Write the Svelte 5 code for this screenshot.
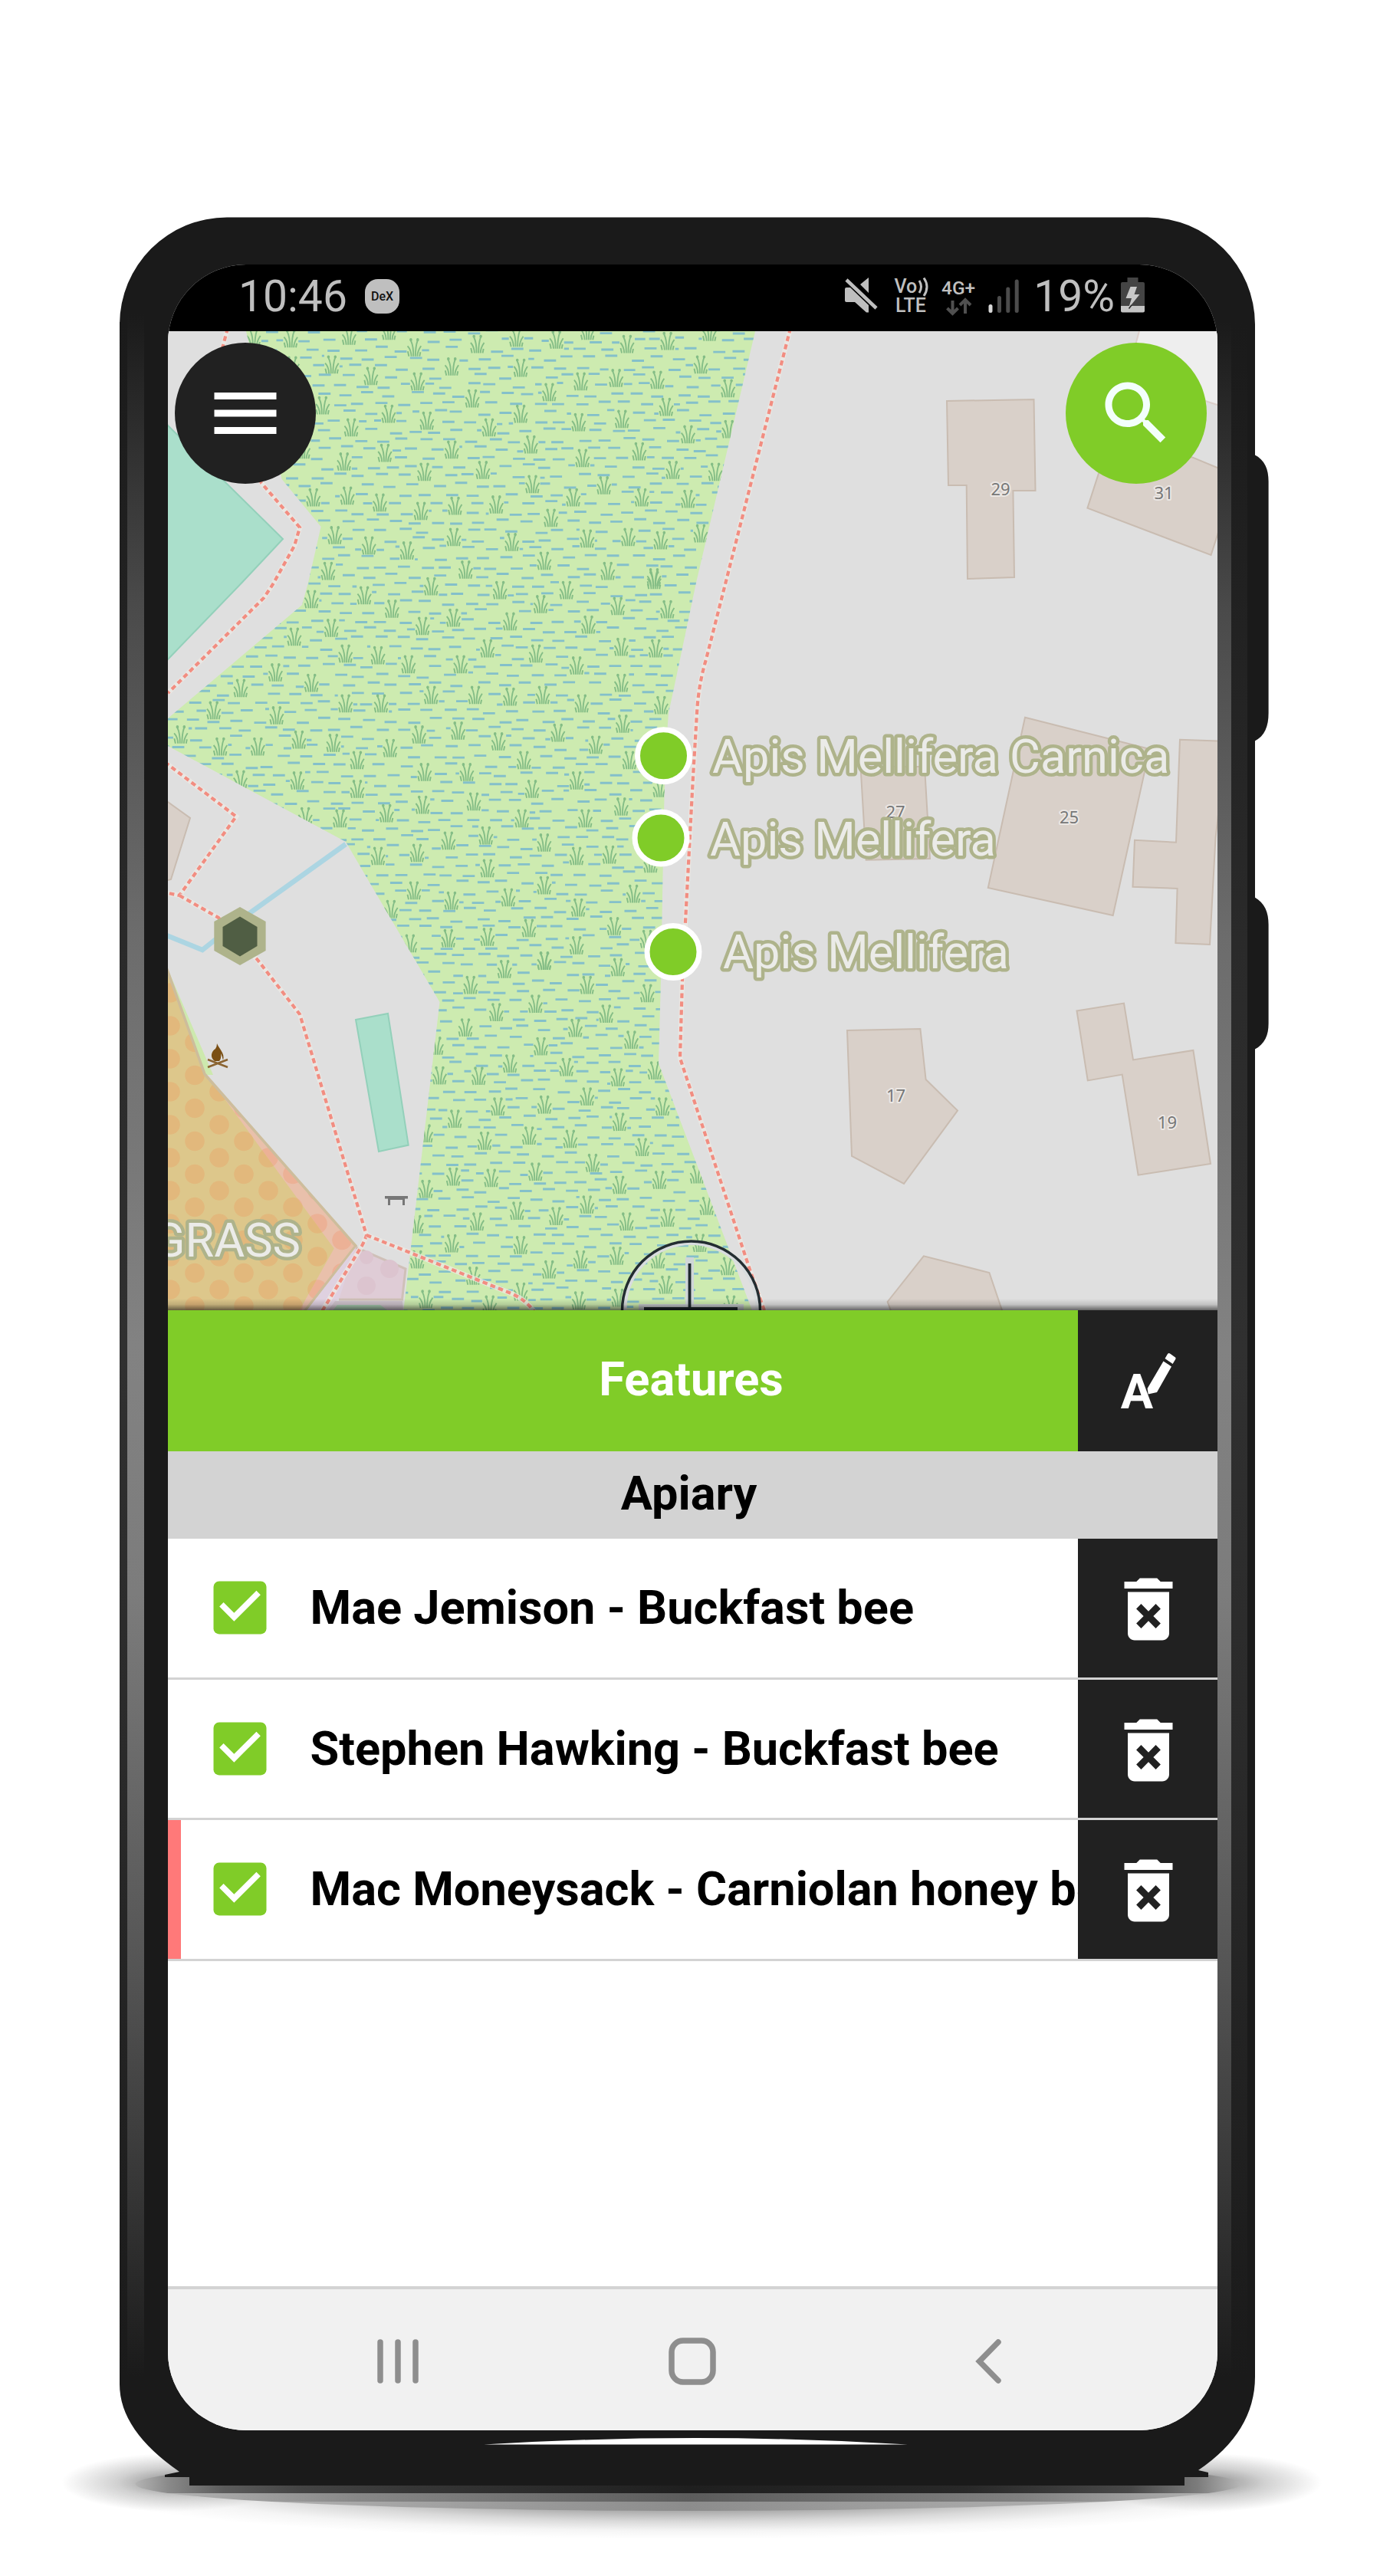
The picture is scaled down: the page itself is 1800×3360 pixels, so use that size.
<script>
  const features = [
    { name: 'Mae Jemison - Buckfast bee', alert: false },
    { name: 'Stephen Hawking - Buckfast bee', alert: false },
    { name: 'Mac Moneysack - Carniolan honey bee', alert: true }
  ];

  const markers = [
    { x: 865.5, y: 985.7, tx: 929, ty: 1008.3, label: 'Apis Mellifera Carnica' },
    { x: 862, y: 1093, tx: 926, ty: 1115.8, label: 'Apis Mellifera' },
    { x: 878, y: 1241.5, tx: 943, ty: 1263.2, label: 'Apis Mellifera' }
  ];

  const houses = [
    '1235,523 1348.5,521 1350.5,640 1321.4,640 1323,753 1262,755 1260.7,633 1237,633',
    '1450,565 1418.4,662.7 1579.6,724 1600,660 1600,615 1555.6,596.7',
    '1337,935.7 1499.5,977 1451.7,1194 1288.8,1158',
    '1122.5,1000 1206,1000 1213,1120 1129.7,1121.7',
    '1539,964.7 1600,967 1585.5,1093 1578,1232 1533.4,1230 1535.6,1159 1477.5,1156.7 1480,1095.7 1534,1098.7',
    '1105,1344 1200.4,1342 1207.6,1408 1249,1448.6 1179,1544 1111,1507.8',
    '1404.5,1318.4 1466,1308.6 1478,1382.4 1556.4,1370 1579,1518 1484.6,1532.7 1463.7,1401.6 1418.8,1409.4',
    '1157.6,1698 1204.8,1638.4 1290.4,1660 1310.7,1720 1166,1720',
    '210,1040 219,1046 248,1067 223,1147 210,1150'
  ];

  const numbers = [
    { x: 1305, y: 646, n: 29 },
    { x: 1518, y: 650.5, n: 31 },
    { x: 1168, y: 1066.5, n: 27 },
    { x: 1394.6, y: 1074, n: 25 },
    { x: 1168.6, y: 1437, n: 17 },
    { x: 1522.4, y: 1472, n: 19 }
  ];

  const trails = [
    'M297 428L288 462L300 540L341 630L391 688L384 712L356 762L344 780L219 904',
    'M215 994L308 1065L234 1168L215 1164',
    'M234 1168L285 1197L336 1252L391 1323L478 1611Q476 1618 472 1625L419 1712',
    'M478 1611L669 1688Q686 1696 697 1711',
    'M1031 428L921 860Q911 893 909 930L904 1013L890 1278L887 1380L978 1656L998 1712'
  ];

  // Reed tufts, grouped by survey sheet: origin, horizontal and vertical scale, points.
  const sheets = [
    [140, 260, 1.823, 3, '348,540 436,545 575,535 670,515 730,580 880,567 973,542 1068,550 1236,567 1332,555 1432,520 1142,515 534,647 627,692 738,713 819,655 983,660 1126,713 1210,700 1308,707 1411,647 1476,740 512,807 868,780 1051,755 669,840 760,867 580,893 983,840 1121,873 1224,860 1329,813 1381,920 1478,900 908,893 660,993 563,1027 819,980 1007,960 1130,1013 1265,987 1345,1060 1446,1067 754,1067 893,1060 1011,1115 1181,1120 490,1167 571,1160 648,1187 746,1220 827,1200 925,1195 1108,1167 1271,1167 1381,1173 1055,1247 541,1315 622,1355 713,1375 824,1322 962,1342 1141,1328 1239,1322 1316,1335 1411,1308 1039,1415 525,1455 852,1450 1190,1455 1300,1480 466,980 440,650'],
    [140, 760, 1.96, 3, '828,15 1004,30 1174,30 1398,-10 522,65 657,50 728,103 1108,85 1305,92 1432,105 885,138 806,170 573,178 478,212 1030,152 1230,165 972,258 1096,278 609,278 692,285 770,320 903,320 1314,252 1402,258 1200,325 430,352 522,393 1314,393 341,413 272,500 433,520 609,473 700,473 828,440 941,440 1030,447 1113,440 1213,473 1416,480 1318,553 188,595 289,642 385,642 490,615 578,628 797,595 897,580 723,648 1000,622 1152,588 1249,635 639,695 1065,695 1335,695 811,742 919,742 340,770 486,775 1200,775 639,808 1086,808 1413,805 806,870 937,857 1314,877 506,915 595,923 714,903 1060,923 1222,923 872,1010 968,990 692,1070 792,1058 1117,1018 1200,1070 1284,1065 972,1118 1389,1100 784,1205 1117,1185 880,1245 1025,1232 1345,1218 725,1278 1204,1272 1078,1352 1296,1345 872,1392 972,1387 1380,1395 774,1412 1200,1420 1117,1480'],
    [200, 1200, 1.96, 2.8, '1000,150 898,180 1188,173 811,238 1109,238 1263,268 977,307 877,337 1158,343 798,393 1079,395 991,462 1222,438 724,460 912,525 1056,538 732,568 832,570 1188,575 1282,550 1109,645 881,682 1000,675 1302,682 771,727 1192,738 961,788 847,807 1066,800 1250,830 697,780 1123,888 977,920 767,938 864,943 697,983 1192,968 1294,950 1390,930 1109,1040 1415,1045 930,1063 1030,1082 828,1102 1210,1102 1315,1088 673,1112 763,1182 939,1188 1397,1180 1092,1240 1185,1227 1290,1240 1012,1277 675,1240 1468,1265 818,1300 1310,1333 939,1358 697,1385 1088,1390 1190,1380 860,1405 1476,1405']
  ];

  const tufts = sheets.flatMap(([ox, oy, sx, sy, points]) =>
    points.split(' ').map((p) => {
      const [x, y] = p.split(',').map(Number);
      return { x: +(ox + x / sx).toFixed(1), y: +(oy + y / sy).toFixed(1) };
    })
  );

  // Water dashes on a jittered grid; a dash that meets a tuft is trimmed to what lies beside it.
  let seed = 7;
  function random() {
    seed = (seed * 16807) % 2147483647;
    return seed / 2147483647;
  }
  let water = '';
  for (let row = 0; row < 110; row++) {
    for (let col = 0; col < 29; col++) {
      let start = 200 + col * 29 + (row % 2) * 14 + (random() - 0.5) * 11;
      const y = 432 + row * 11.8 + (random() - 0.5) * 7;
      let end = start + 15.8;
      for (const t of tufts) {
        if (y < t.y - 13 || y > t.y + 13 || end < t.x - 10 || start > t.x + 10) continue;
        if (start < t.x - 10) end = t.x - 10;
        else if (end > t.x + 10) start = t.x + 10;
        else end = start;
      }
      if (end - start > 3) water += `M${start.toFixed(1)} ${y.toFixed(1)}H${end.toFixed(1)}`;
    }
  }
</script>

<div class="stage">
  <svg class="frame" viewBox="0 0 1800 3360" aria-hidden="true">
    <defs>
      <radialGradient id="floor">
        <stop offset="0" stop-color="#000" stop-opacity=".6" />
        <stop offset=".48" stop-color="#000" stop-opacity=".34" />
        <stop offset=".68" stop-color="#000" stop-opacity=".15" />
        <stop offset=".85" stop-color="#000" stop-opacity=".04" />
        <stop offset="1" stop-color="#000" stop-opacity="0" />
      </radialGradient>
      <radialGradient id="corner">
        <stop offset="0" stop-color="#000" stop-opacity=".42" />
        <stop offset=".5" stop-color="#000" stop-opacity=".16" />
        <stop offset="1" stop-color="#000" stop-opacity="0" />
      </radialGradient>
      <linearGradient id="edge" x1="0" x2="0" y1="0" y2="1">
        <stop offset="0" stop-color="#1a1a1a" />
        <stop offset=".14" stop-color="#4a4a4a" />
        <stop offset=".3" stop-color="#6c6c6c" />
        <stop offset=".5" stop-color="#828282" />
        <stop offset=".62" stop-color="#7c7c7c" />
        <stop offset=".8" stop-color="#555" />
        <stop offset=".93" stop-color="#303030" />
        <stop offset="1" stop-color="#1a1a1a" />
      </linearGradient>
      <linearGradient id="rim" x1="0" x2="0" y1="0" y2="1">
        <stop offset="0" stop-color="#1a1a1a" />
        <stop offset=".3" stop-color="#2a2a2a" />
        <stop offset=".5" stop-color="#303030" />
        <stop offset=".7" stop-color="#2a2a2a" />
        <stop offset="1" stop-color="#1a1a1a" />
      </linearGradient>
      <linearGradient id="band1"><stop offset="0" stop-color="#b4b4b4" /><stop offset=".03" stop-color="#8a8a8a" /><stop offset=".08" stop-color="#5c5c5c" /><stop offset=".15" stop-color="#444" /><stop offset=".25" stop-color="#363636" /><stop offset=".5" stop-color="#1f1f1f" /><stop offset=".75" stop-color="#282828" /><stop offset=".9" stop-color="#484848" /><stop offset=".96" stop-color="#7c7c7c" /><stop offset="1" stop-color="#b8b8b8" /></linearGradient>
      <linearGradient id="band2"><stop offset="0" stop-color="#bbb" /><stop offset=".2" stop-color="#888" /><stop offset=".5" stop-color="#5c5c5c" /><stop offset=".8" stop-color="#808080" /><stop offset="1" stop-color="#bbb" /></linearGradient>
      <linearGradient id="band3"><stop offset="0" stop-color="#bbb" /><stop offset=".5" stop-color="#8c8c8c" /><stop offset="1" stop-color="#c0c0c0" /></linearGradient>
      <clipPath id="base"><ellipse cx="897.5" cy="3240" rx="721" ry="35" /></clipPath>
    </defs>
    <ellipse cx="900" cy="3240" rx="820" ry="72" fill="url(#floor)" />
    <ellipse cx="225" cy="3238" rx="145" ry="38" fill="url(#corner)" />
    <ellipse cx="1575" cy="3238" rx="150" ry="38" fill="url(#corner)" />
    <g clip-path="url(#base)">
      <rect x="176" y="3200" width="1444" height="52" fill="url(#band1)" />
      <rect x="176" y="3252" width="1444" height="11" fill="url(#band2)" />
      <rect x="176" y="3263" width="1444" height="12" fill="url(#band3)" />
    </g>
    <path fill="#1a1a1a" d="M1636 593C1650 600 1654.600 612 1654.600 628V930C1654.600 947 1650 960 1636 967ZM1636 1170C1650 1178 1654.600 1190 1654.600 1206V1335C1654.600 1350 1650 1362 1636 1369Z" />
    <path fill="#1a1a1a" d="M296 283.500H1497A140 140 0 0 1 1637 423V3100Q1637 3172 1563 3222L1576 3225V3231H1545V3242H247V3231H215V3228L234 3224Q156 3170 156 3110V423A140 140 0 0 1 296 283.500Z" />
    <rect x="156" y="420" width="10" height="2680" fill="url(#rim)" />
    <rect x="166" y="410" width="22" height="2690" fill="url(#edge)" />
    <rect x="1587" y="420" width="19" height="2680" fill="url(#edge)" />
    <rect x="1606" y="420" width="21" height="2680" fill="url(#rim)" />
    <path fill="#fff" d="M631 3188.600Q907 3171.500 1184 3188.600Z" />
  </svg>

  <main class="screen">
    <div class="status">
      <span class="clock">10:46</span>
      <svg class="dex" width="46" height="46" viewBox="0 0 46 46"><rect width="45" height="45" rx="17" fill="#bfbfbf" /><text class="dextext" x="22.500" y="28">DeX</text></svg>
      <svg class="signals" width="236" height="87" viewBox="1098 345 236 87">
        <g fill="#bfbfbf">
          <path d="M1133 362V382L1122 371ZM1102 377Q1102 375 1104 375H1109L1133 398V407.500H1130L1115 394H1104Q1102 394 1102 392Z" />
          <path d="M1104 365L1143 402" stroke="#bfbfbf" stroke-width="4.500" fill="none" />
          <text class="badge" x="1166.500" y="381.500">Vo</text>
          <text class="badge" x="1168" y="407.300">LTE</text>
          <text class="badge small" x="1228" y="383.500">4G+</text>
        </g>
        <g fill="none" stroke="#bfbfbf" stroke-width="3">
          <path d="M1199 366Q1204 374 1199 382M1205 362.500Q1213 374 1205 386" />
        </g>
        <g fill="none" stroke="#505050" stroke-width="4">
          <path d="M1242.500 392V409M1235.500 402L1242.500 409L1249.500 402M1259 409V392M1252 398L1259 391L1266 398" />
        </g>
        <g stroke-width="5" stroke-linecap="round">
          <path stroke="#d8d8d8" d="M1292 399.500V405.500" />
          <path stroke="#4c4c4c" d="M1303.500 388.500V405.500M1314.800 377V405.500M1326.200 367V405.500" />
        </g>
      </svg>
      <span class="percent">19%</span>
      <svg width="31" height="87" viewBox="1462 345 31 87">
        <path fill="#444" d="M1470.500 362H1484.500V368H1491Q1493 368 1493 370V399H1462V370Q1462 368 1464 368H1470.500Z" />
        <path fill="#c4c4c4" d="M1462 399H1493V405.500Q1493 407.500 1491 407.500H1464Q1462 407.500 1462 405.500Z" />
        <path fill="#c8c8c8" d="M1474.500 374H1483L1479.500 384H1486.500L1472 402L1476 389H1468.500Z" />
        <path stroke="#222" stroke-width="1.500" d="M1476 398L1472.500 402.500" />
      </svg>
    </div>

    <div class="map">
      <svg width="1369" height="1277" viewBox="219 432 1369 1277">
        <defs>
          <clipPath id="marsh"><path d="M320 428L367.600 625L418.600 687L402 760L394 789L219 937L210 955L219 973L451 1098L573.500 1307L526 1712H982L859 1387L862 1278L866 1060L868 985L872 930L880 893L908 760L986 428Z" /></clipPath>
          <g id="tuft" fill="none" stroke="#84bd86">
            <path stroke-width="1.900" d="M-3.800 11.500C-4 6-5 2-8.800-2M-1.200 11.500C-1 3-2-4-4.500-9M1.400 11.500C1.500 4 2-3 4.200-9M4 11.500C4 6 6 2 8.800-2M6.800 11.500L8 6M-7 11.500L-8.500 5" />
            <path stroke-width="3.500" stroke-linecap="round" d="M-4.500-10.500v.6M4.400-10.500v.6" />
          </g>
          <pattern id="yellowdots" x="222" y="1424" width="64" height="43" patternUnits="userSpaceOnUse" fill="#e2b87c"><circle cx="32" cy="21.500" r="12.800" /><circle cx="0" cy="0" r="12.800" /><circle cx="64" cy="0" r="12.800" /><circle cx="0" cy="43" r="12.800" /><circle cx="64" cy="43" r="12.800" /></pattern>
          <pattern id="pinkdots" x="222" y="1424" width="64" height="43" patternUnits="userSpaceOnUse" fill="#ecb196"><circle cx="32" cy="21.500" r="12.800" /><circle cx="0" cy="0" r="12.800" /><circle cx="64" cy="0" r="12.800" /><circle cx="0" cy="43" r="12.800" /><circle cx="64" cy="43" r="12.800" /></pattern>
          <linearGradient id="lift" x1="0" x2="0" y1="0" y2="1"><stop offset="0" stop-color="#000" stop-opacity="0" /><stop offset=".5" stop-color="#000" stop-opacity=".13" /><stop offset="1" stop-color="#000" stop-opacity=".55" /></linearGradient>
        </defs>
        <rect x="219" y="432" width="1369" height="1277" fill="#dfdfdf" />
        <path fill="#eee" stroke="#dccfca" stroke-width="2" d="M1487 428L1470 490L1600 532V428Z" />

        <g clip-path="url(#marsh)">
          <rect x="210" y="425" width="790" height="1290" fill="#cdebb0" />
          <path d={water} stroke="#84c0ca" stroke-width="2.900" />
          {#each tufts as t}
            <use href="#tuft" x={t.x} y={t.y} />
          {/each}
        </g>

        <g fill="#aadfcb" stroke="#93d0ba" stroke-width="2">
          <path d="M210 540L219 555L369 703L315.500 760L219 860L210 870Z" />
          <path d="M464 1330L506 1322L532.700 1493.600L494 1502Z" />
        </g>
        <path fill="none" stroke="#acd5e2" stroke-width="6.500" d="M210 1217L264 1239L313 1200L451 1101" />

        <path fill="#cde9ae" d="M215 1255L278 1402L266 1402L215 1285Z" />
        <path fill="#e9c0ab" d="M219 1268L266 1400L464 1625L396 1712H215Z" />
        <path fill="url(#pinkdots)" d="M219 1268L266 1400L464 1625L396 1712H215Z" />
        <path fill="#ddc78b" d="M219 1268L266 1400L292 1432L435.700 1628.600L389 1712H215Z" />
        <path fill="url(#yellowdots)" d="M219 1268L266 1400L292 1432L435.700 1628.600L389 1712H215Z" />
        <path fill="none" stroke="#cdbd9c" stroke-width="3.500" d="M217 1262L267 1401L464 1625L396 1712" />
        <path fill="#dfd1e0" d="M464 1627L529 1655L524 1695H440L426 1712H398Z" />
        <path fill="#dfccd6" stroke="#cfc0b8" stroke-width="3" d="M464 1627L529 1655L524.500 1695H442" />
        <path fill="#d0c5ce" d="M437 1697H525L526 1712H426Z" />
        <path fill="#abcfb4" d="M440 1702H496L509 1712H432Z" />
        <g fill="#dcc4cf"><circle cx="478" cy="1677" r="12" /><circle cx="508" cy="1655" r="12" /><circle cx="478" cy="1640" r="9" /></g>

        <g fill="#d9d0c9" stroke="#c9bcb1" stroke-width="2">
          {#each houses as points}<polygon {points} />{/each}
        </g>

        {#each trails as d}
          <path {d} fill="none" stroke="#eee9e4" stroke-width="6.500" stroke-opacity=".75" />
          <path {d} fill="none" stroke="#f28d81" stroke-width="4.200" stroke-dasharray="6.500 4.400" />
        {/each}

        {#each numbers as h}
          <text class="house" x={h.x} y={h.y}>{h.n}</text>
        {/each}

        <g fill="#7a4f14"><path d="M283 1361C285 1367 294 1374 291 1383Q290 1378 288 1374Q289 1381 286 1384H280C273 1379 276 1371 281 1368Q283 1365 283 1361Z" /><path fill="none" stroke="#8a6330" stroke-width="2.500" d="M271 1392L297 1382M271 1382L297 1392" /></g>
        <path fill="#777" d="M502 1560H532V1563.500H528V1572H525V1565H509V1572H506V1563.500H502Z" />

        <path fill="#aeb38b" d="M313 1183L346.600 1202V1240L313 1259L279.300 1240V1202Z" />
        <path fill="#505e44" d="M313 1195.500L335.500 1209V1234L313 1247.500L290.500 1234V1209Z" />

        <text class="maplabel grass" x="392" y="1638.600">GRASS</text>
        {#each markers as m}
          <circle cx={m.x} cy={m.y} r="34" fill="#80cc28" stroke="#fff" stroke-width="7" />
          <text class="maplabel" x={m.tx} y={m.ty}>{m.label}</text>
        {/each}

        <g fill="none">
          <circle cx="901.500" cy="1708" r="86.500" stroke="#d8dcde" stroke-width="5" />
          <path stroke="#cfd6d8" stroke-width="11" d="M899.500 1640V1704" />
          <circle cx="901.500" cy="1709" r="90" stroke="#232d31" stroke-width="3.500" />
          <path stroke="#c5cacc" stroke-width="10" d="M833 1706H970" />
          <path stroke="#1f2a2e" stroke-width="3.800" d="M899.500 1648V1709M840 1707H962" />
        </g>
        <rect x="219" y="1694" width="1369" height="15" fill="url(#lift)" />
      </svg>

      <button class="fab menu" aria-label="Menu"><svg width="108" height="108" viewBox="0 0 24 24"><path fill="#fff" d="M3 18h18v-2H3v2zm0-5h18v-2H3v2zm0-7v2h18V6H3z" /></svg></button>
      <button class="fab search" aria-label="Search"><svg width="108" height="108" viewBox="0 0 24 24"><path fill="#f3fffb" d="M15.500 14h-.79l-.28-.27C15.410 12.590 16 11.110 16 9.500 16 5.910 13.090 3 9.500 3S3 5.910 3 9.500 5.910 16 9.500 16c1.610 0 3.090-.59 4.230-1.570l.27.28v.79l5 4.990L20.490 19l-4.990-5zm-6 0C7.010 14 5 11.990 5 9.500S7.010 5 9.500 5 14 7.010 14 9.500 11.990 14 9.500 14z" /></svg></button>
    </div>

    <header class="title">
      <h1>Features</h1>
      <button class="side" aria-label="Edit labels">
        <svg width="182" height="184" viewBox="1406 1709 182 184" fill="#fff">
          <text class="letter" x="1483" y="1836.500">A</text>
          <path d="M1517.500 1775.500L1528 1782.400L1509 1816L1497.700 1818.500L1496.600 1811ZM1523 1766Q1524.500 1764.500 1526 1765.500L1533 1770.500Q1534 1771.500 1533.200 1773L1529.600 1779L1519.500 1772Z" />
        </svg>
      </button>
    </header>
    <h2>Apiary</h2>
    <ul>
      {#each features as f}
        <li>
          <div class="row" class:alert={f.alert}>
            <svg class="check" width="92" height="92" viewBox="0 0 24 24"><rect x="3" y="3" width="18" height="18" rx="1.900" fill="#80cc28" /><path fill="#fff" d="M10 16.600l-5-5 1.410-1.410L10 13.770l7.590-7.590L19 7.600z" /></svg>
            <span>{f.name}</span>
          </div>
          <button class="side" aria-label="Delete"><svg class="bin" width="108" height="108" viewBox="0 0 24 24"><path fill="#fff" d="M6 19c0 1.100.9 2 2 2h8c1.100 0 2-.9 2-2V7H6v12zm2.460-7.120l1.410-1.410L12 12.590l2.120-2.120 1.410 1.410L13.410 14l2.120 2.120-1.410 1.410L12 15.410l-2.120 2.120-1.410-1.410L10.590 14l-2.130-2.120zM15.500 4l-1-1h-5l-1 1H5v2h14V4z" /></svg></button>
        </li>
      {/each}
    </ul>
    <div class="empty"></div>
    <nav>
      <svg width="58" height="62" viewBox="0 0 58 62"><path stroke="#8e8e8e" stroke-width="7.500" stroke-linecap="round" d="M4 6V56M27 6V56M50 6V56" /></svg>
      <svg class="home" width="62" height="62" viewBox="0 0 62 62"><rect x="4" y="4" width="54" height="54" rx="15" fill="none" stroke="#8e8e8e" stroke-width="7.500" /></svg>
      <svg width="34" height="62" viewBox="0 0 34 62"><path fill="none" stroke="#8e8e8e" stroke-width="7.500" stroke-linecap="round" d="M30 6L5.500 31L30 56" /></svg>
    </nav>
  </main>
</div>

<style>
  :global(body) { background: #fff; }
  .stage {
    position: relative;
    box-sizing: border-box;
    width: 1800px;
    height: 3360px;
    padding: 345px 0 0 219px;
    overflow: hidden;
    background: #fff;
    font-family: Roboto, sans-serif;
  }
  .frame { position: absolute; inset: 0; width: 1800px; height: 3360px; }
  svg { display: block; }
  .screen {
    position: relative;
    display: flex;
    flex-direction: column;
    width: 1369px;
    height: 2825px;
    border-radius: 102px;
    overflow: hidden;
    background: #fff;
  }
  .status {
    display: flex;
    align-items: center;
    flex: none;
    box-sizing: border-box;
    height: 87px;
    padding: 0 95px 0 92px;
    background: #000;
    color: #bfbfbf;
    font-size: 57px;
    line-height: 84px;
  }
  .clock, .percent { height: 87px; }
  .dex { margin: 0 auto 3px 23px; }
  .dextext { font: 500 16px Roboto, sans-serif; text-anchor: middle; fill: #111; }
  .badge { font: 500 25px Roboto, sans-serif; }
  .small { font-size: 24.500px; }
  .percent { margin: 0 8px 0 14px; }
  .map { position: relative; flex: none; height: 1277px; }
  button { border: 0; padding: 0; font: inherit; }
  .fab {
    position: absolute;
    top: 15px;
    display: grid;
    place-items: center;
    width: 184px;
    height: 184px;
    border-radius: 50%;
  }
  .menu { left: 9px; background: #212121; }
  .search { right: 14px; background: #80cc28; }
  .house {
    font: 22px "Noto Sans", sans-serif;
    text-anchor: middle;
    fill: #777;
    stroke: #ebe7e4;
    stroke-width: 4px;
    stroke-linejoin: round;
    paint-order: stroke;
  }
  .maplabel {
    font: 61.300px Roboto, sans-serif;
    fill: #ebebe8;
    stroke: #aeb38b;
    stroke-width: 9px;
    stroke-linejoin: round;
    paint-order: stroke;
  }
  .grass { text-anchor: end; }
  .title { display: flex; flex: none; height: 183.600px; background: #80cc28; }
  h1 {
    width: 100%;
    box-sizing: border-box;
    margin: 0 -182px 0 0;
    padding-right: 4px;
    font-size: 61.300px;
    font-weight: 700;
    line-height: 180px;
    text-align: center;
    color: #fff;
  }
  .side {
    position: relative;
    display: grid;
    place-items: center;
    flex: none;
    width: 182px;
    background: #212121;
  }
  .title .side { margin-left: auto; }
  .letter { font: 700 63px Roboto, sans-serif; text-anchor: middle; }
  h2 {
    flex: none;
    box-sizing: border-box;
    height: 114.400px;
    margin: 0;
    padding-right: 10px;
    background: #d3d3d3;
    font-size: 61.300px;
    font-weight: 700;
    line-height: 111px;
    text-align: center;
    color: #000;
  }
  ul { flex: none; margin: 0; padding: 0; list-style: none; }
  li { display: flex; box-sizing: border-box; height: 183.600px; border-bottom: 3px solid #d3d3d3; }
  .row {
    display: flex;
    align-items: center;
    flex: 1;
    gap: 46px;
    min-width: 0;
    box-sizing: border-box;
    padding-left: 47.500px;
    overflow: hidden;
    font-size: 61.300px;
    font-weight: 700;
    white-space: nowrap;
    color: #000;
  }
  .alert { padding-left: 30.500px; border-left: 17px solid #ff7979; }
  .check { flex: none; }
  .bin { margin: 4px 0 0 2px; }
  .empty { flex: 1; }
  nav {
    display: flex;
    align-items: center;
    justify-content: space-between;
    box-sizing: border-box;
    height: 188.500px;
    padding: 5px 282px 0 273px;
    border-top: 4px solid #d3d3d3;
    background: #f1f1f1;
  }
  .home { margin-right: 17px; }
</style>
